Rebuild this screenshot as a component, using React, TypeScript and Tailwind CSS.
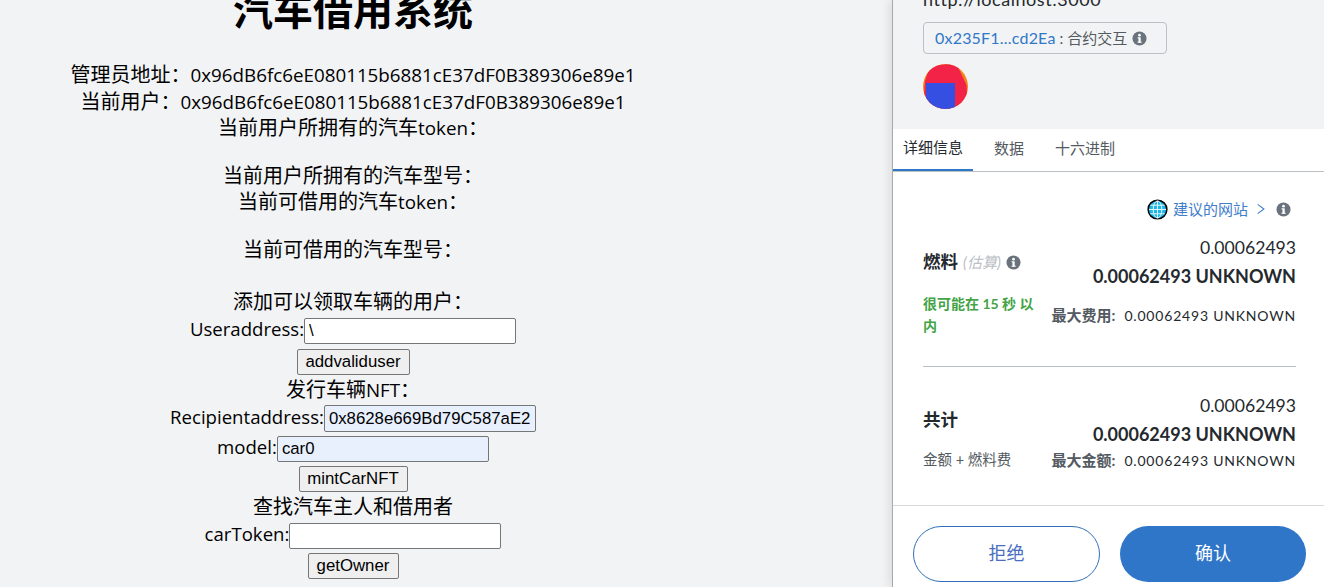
const SANS = "font-['Open_Sans','Noto_Sans_CJK_SC',sans-serif]";

function Info({ className = "" }: { className?: string }) {
  return (
    <svg viewBox="0 0 16 16" className={`w-[15px] h-[15px] shrink-0 ${className}`}>
      <circle cx="8" cy="8" r="7.5" fill="#6a737d" />
      <rect x="6.9" y="6.8" width="2.4" height="5.6" fill="#fff" />
      <rect x="5.9" y="6.8" width="2" height="1.1" fill="#fff" />
      <rect x="5.9" y="11.4" width="4.4" height="1.1" fill="#fff" />
      <circle cx="8" cy="4.4" r="1.4" fill="#fff" />
    </svg>
  );
}

function Globe() {
  return (
    <svg viewBox="0 0 22 22" className="w-[21px] h-[21px] shrink-0">
      <circle cx="11" cy="11" r="9.8" fill="#1fb6e8" stroke="#000" strokeWidth="1.6" />
      <g stroke="#e8f8fd" strokeWidth="1" fill="none">
        <ellipse cx="11" cy="11" rx="4.5" ry="9" />
        <path d="M11 2v18M2 11h18M3.5 6.5h15M3.5 15.5h15" />
      </g>
    </svg>
  );
}

function L({ children }: { children: string }) {
  return <span className="text-[18.8px]">{children}</span>;
}

function Row({ label, value, bg, h = "h-[26px]", cls = "" }: { label: string; value: string; bg: string; h?: string; cls?: string }) {
  return (
    <div className={`flex justify-center items-center ${cls}`}>
      <span className="text-[18.6px] leading-[22px] h-[22px] mb-[4px]">{label}</span>
      <input
        readOnly
        value={value}
        className={`w-[212px] ${h} ${bg} border border-[#767676] rounded-[2px] px-[4px] text-[16.8px] text-black font-['Liberation_Sans',sans-serif] outline-none`}
      />
    </div>
  );
}

function Btn({ children, w }: { children: string; w: string }) {
  return (
    <div className="flex justify-center">
      <button className={`${w} h-[26px] bg-[#efefef] border border-[#767676] rounded-[2px] text-[16.8px] text-black font-['Liberation_Sans',sans-serif] leading-none`}>
        {children}
      </button>
    </div>
  );
}

function Amounts() {
  return (
    <div className="flex flex-col items-end">
      <div className="text-[17.6px] leading-[24px] text-[#24292e]">0.00062493</div>
      <div className="text-[18px] leading-[24px] mt-[4px] font-bold text-[#24292e]">0.00062493 UNKNOWN</div>
    </div>
  );
}

function MaxLine({ label }: { label: string }) {
  return (
    <div className="text-[14px] leading-[22px] text-[#24292e] whitespace-nowrap tracking-[0.8px]">
      <span className="font-bold text-[#535a61] tracking-normal text-[15px]">{label}</span>
      <span className="ml-[9px]">0.00062493 UNKNOWN</span>
    </div>
  );
}

export default function App() {
  return (
    <div className={`w-[1324px] h-[587px] overflow-hidden bg-[#f2f3f5] flex text-black ${SANS}`}>
      <main className="w-[706px] shrink-0 text-center text-[20px] leading-[26px]">
        <h1 className="text-[40px] leading-[48px] font-bold mt-[-14px] mb-[28px]">汽车借用系统</h1>
        <div className="h-[27px]">管理员地址：<L>0x96dB6fc6eE080115b6881cE37dF0B389306e89e1</L></div>
        <div className="h-[26px]">当前用户：<L>0x96dB6fc6eE080115b6881cE37dF0B389306e89e1</L></div>
        <div className="h-[26px]">当前用户所拥有的汽车<L>token</L>：</div>
        <div className="h-[26px] mt-[22px]">当前用户所拥有的汽车型号：</div>
        <div className="h-[26px]">当前可借用的汽车<L>token</L>：</div>
        <div className="h-[26px] mt-[22px]">当前可借用的汽车型号：</div>
        <div className="h-[26px] mt-[26px]">添加可以领取车辆的用户：</div>
        <Row label="Useraddress:" value="\" bg="bg-white" cls="mt-[3px]" />
        <div className="mt-[5px]"><Btn w="w-[113px]">addvaliduser</Btn></div>
        <div className="h-[26px] mt-[2px]">发行车辆<L>NFT</L>：</div>
        <Row label="Recipientaddress:" value="0x8628e669Bd79C587aE28" bg="bg-[#e8f0fe]" h="h-[27px]" cls="mt-[2px]" />
        <Row label="model:" value="car0" bg="bg-[#e8f0fe]" cls="mt-[4px]" />
        <div className="mt-[4px]"><Btn w="w-[109px]">mintCarNFT</Btn></div>
        <div className="h-[26px] mt-[2px]">查找汽车主人和借用者</div>
        <Row label="carToken:" value="" bg="bg-white" cls="mt-[3px]" />
        <div className="mt-[4px]"><Btn w="w-[91px]">getOwner</Btn></div>
      </main>

      <div className="flex-1" />

      <aside className="w-[432px] shrink-0 h-full flex flex-col border-l border-[#a9a9a9] bg-white shadow-[-4px_0_8px_rgba(0,0,0,0.08)] font-['Lato','Noto_Sans_CJK_SC',sans-serif]">
        <section className="h-[129px] shrink-0 bg-[#f2f3f4] pl-[30px] relative overflow-hidden">
          <div className="text-[18px] leading-[20px] text-[#24292e] mt-[-11px] tracking-[0.55px]">http://localhost:3000</div>
          <div className="mt-[13px] w-[244px] h-[32px] border border-[#bbc0c5] rounded-[4px] flex items-center pl-[11px]">
            <span className="text-[16px] text-[#2f78c9] tracking-[0.2px]">0x235F1...cd2Ea</span>
            <span className="text-[#535a61] text-[15px] ml-[4px] whitespace-nowrap">: 合约交互</span>
            <Info className="ml-[5px]" />
          </div>
          <svg viewBox="0 0 45 45" className="w-[45px] h-[45px] mt-[10px]">
            <defs>
              <clipPath id="jazz"><circle cx="22.5" cy="22.5" r="22.5" /></clipPath>
            </defs>
            <g clipPath="url(#jazz)">
              <rect width="45" height="45" fill="#f0861a" />
              <path d="M5 8L10 1L30 0L35 3L43.5 21L45 45H0L2 17Z" fill="#f32348" />
              <path d="M3 19H32V45H3Z" fill="#364fe3" />
            </g>
          </svg>
        </section>

        <nav className="h-[43px] shrink-0 flex border-b border-[#bbc0c5] text-[15px] bg-white">
          <div className="w-[80px] h-[42px] flex items-center justify-center pb-[3px] text-[#24292e] border-b-2 border-[#2f78c9] -mb-px">详细信息</div>
          <div className="ml-[21px] h-[42px] flex items-center pb-[3px] text-[#535a61]">数据</div>
          <div className="ml-[31px] h-[42px] flex items-center pb-[3px] text-[#535a61]">十六进制</div>
        </nav>

        <div className="flex-1 pl-[30px] pr-[28px] flex flex-col">
          <div className="flex justify-end items-center h-[20px] mt-[27px] mr-[5px] gap-[5px]">
            <Globe />
            <span className="text-[15px] text-[#3f7ecb]">建议的网站</span>
            <svg viewBox="0 0 12 14" className="w-[10px] h-[12px] ml-[3px]"><path d="M2 1.5L9.5 7L2 12.5" fill="none" stroke="#3f7ecb" strokeWidth="1.3" /></svg>
            <Info className="ml-[5px]" />
          </div>

          <div className="flex justify-between items-center mt-[15px] h-[56px]">
            <div className="flex items-center">
              <span className="text-[17.5px] font-bold text-[#24292e]">燃料</span>
              <span className="text-[15px] italic text-[#bbc0c5] ml-[5px]">(估算)</span>
              <Info className="ml-[5px]" />
            </div>
            <Amounts />
          </div>
          <div className="flex justify-between items-center mt-[3px]">
            <div className="w-[120px] text-[14px] leading-[22px] font-bold text-[#43a447]">很可能在 15 秒 以内</div>
            <MaxLine label="最大费用:" />
          </div>
          <div className="border-t border-[#bbc0c5] mt-[29px]" />

          <div className="flex justify-between items-center mt-[25px] h-[56px]">
            <span className="text-[17.5px] font-bold text-[#24292e]">共计</span>
            <Amounts />
          </div>
          <div className="flex justify-between mt-[1px]">
            <div className="text-[14.5px] leading-[22px] text-[#535a61]">金额 + 燃料费</div>
            <MaxLine label="最大金额:" />
          </div>
        </div>

        <footer className="h-[82px] shrink-0 border-t border-[#d6d9dc] flex pl-[20px] pr-[18px] pt-[20px] gap-[20px]">
          <button className="w-[187px] h-[56px] pb-[2px] rounded-full border border-[#2f6fb8] text-[#4a6fc0] text-[18px] bg-white">拒绝</button>
          <button className="w-[186px] h-[56px] pb-[2px] rounded-full bg-[#2f76c9] text-white text-[18px]">确认</button>
        </footer>
      </aside>
    </div>
  );
}
